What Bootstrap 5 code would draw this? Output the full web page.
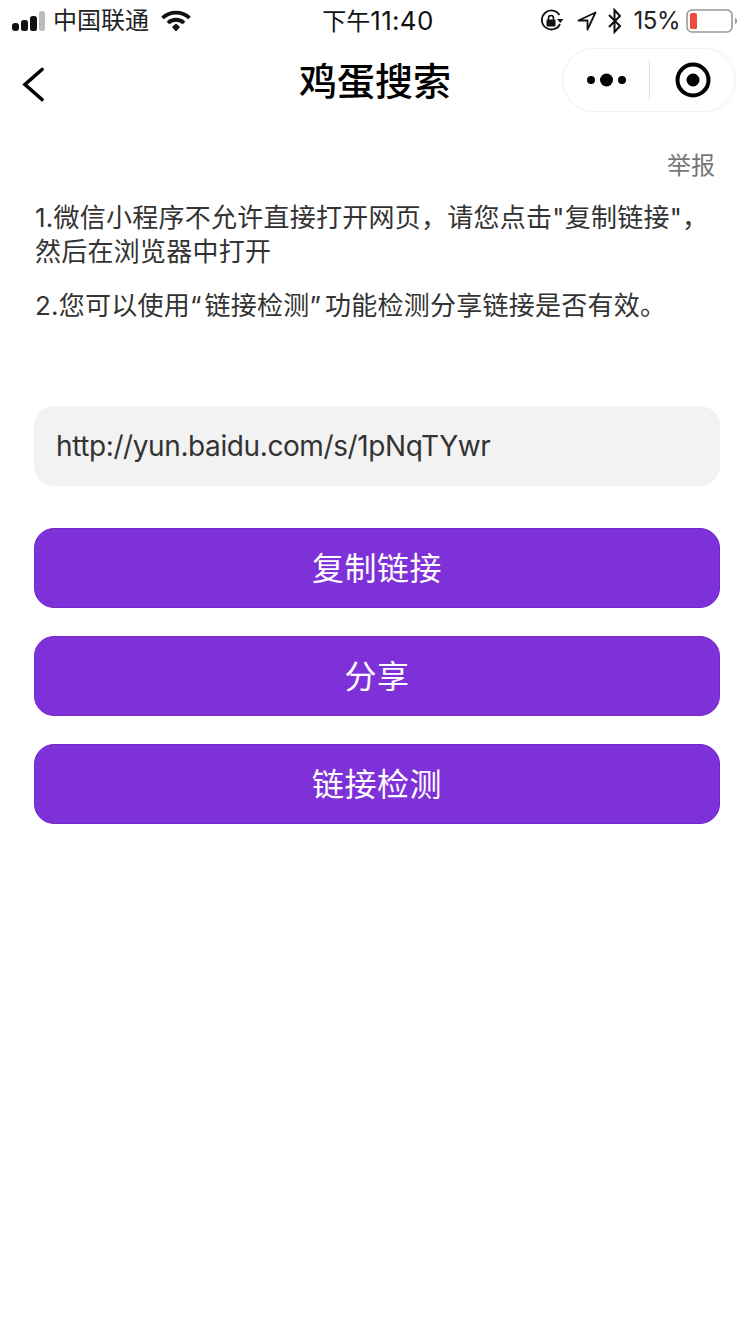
<!DOCTYPE html>
<html lang="zh-CN">

<head>
    <meta charset="UTF-8">
    <meta name="viewport" content="width=device-width, initial-scale=1">
    <title>鸡蛋搜索</title>

    <link href="https://cdn.jsdelivr.net/npm/bootstrap@5.3.2/dist/css/bootstrap.min.css" rel="stylesheet">

    <style>
        body {
            font-family: Inter, "Noto Sans CJK SC", sans-serif;
            background: #fff;
            color: #333;
        }

        .status-bar {
            height: 40px;
            padding: 1px 12px 0 12px;
            font-size: 24px;
            color: #222;
            position: relative;
        }

        .status-time {
            position: absolute;
            left: 0;
            right: 0;
            top: 4px;
            padding-left: 6px;
            text-align: center;
            line-height: 34px;
            color: #111;
        }

        .status-digits {
            font-size: 26px;
            letter-spacing: 0.3px;
        }

        .status-pct {
            letter-spacing: -0.5px;
            margin-left: 11px;
        }

        .title-bar {
            height: 88px;
            padding: 0 14px 0 22px;
            position: relative;
        }

        .page-title {
            position: absolute;
            left: 0;
            right: 0;
            top: 0;
            line-height: 82px;
            text-align: center;
            font-size: 38px;
            font-weight: 500;
            color: #000;
            margin: 0;
        }

        .capsule {
            width: 174px;
            height: 64px;
            margin-top: -8px;
            border: 1px solid #efefef;
            border-radius: 32px;
            background: #fff;
            position: relative;
        }

        .capsule-part {
            width: 86px;
        }

        .capsule-sep {
            width: 1px;
            height: 38px;
            background: #ddd;
        }

        .report-link {
            font-size: 24px;
            color: #777;
            line-height: 34px;
            padding: 21px 35px 0 0;
        }

        .tips {
            padding: 0 30px 0 35px;
            margin-top: 18px;
            font-size: 26px;
            line-height: 34px;
            color: #333;
            letter-spacing: 0.25px;
        }

        .tips p {
            margin: 0 0 20px;
        }

        .wide-mark {
            letter-spacing: 3px;
        }

        .wide-mark-end {
            letter-spacing: 4px;
        }

        .link-box {
            height: 80px;
            margin: 83px 30px 42px 34px;
            padding: 0 22px;
            background: #f2f2f2;
            border-radius: 20px;
            font-size: 28px;
            letter-spacing: -0.4px;
            color: #333;
        }

        .action-list {
            margin: 0 30px 0 34px;
            gap: 28px;
        }

        .btn-egg {
            height: 80px;
            padding-top: 8px;
            border-radius: 20px;
            background: #7f31d9;
            border: 1px solid #7429cb;
            color: #fff;
            font-size: 32px;
            letter-spacing: 0.5px;
        }

        .btn-egg:hover {
            background: #7429cb;
            color: #fff;
        }
    </style>
</head>

<body>

    <!-- status bar -->
    <div class="status-bar d-flex align-items-center">
        <svg width="33" height="20" viewBox="0 0 33 20" style="margin-right:8px">
            <rect x="0" y="12" width="7" height="8" rx="3" fill="#111" />
            <rect x="9" y="9" width="7" height="11" rx="2.500" fill="#111" />
            <rect x="18" y="5" width="7" height="15" rx="2.500" fill="#111" />
            <rect x="27" y="0" width="6" height="20" rx="2.500" fill="#bbb" />
        </svg>
        <span>中国联通</span>
        <svg width="30" height="22" viewBox="0 0 30 22" style="margin-left:12px">
            <path d="M1.500 8a19.500 19.500 0 0 1 27 0" fill="none" stroke="#111" stroke-width="3.800" />
            <path d="M7 13a11.500 11.500 0 0 1 16 0" fill="none" stroke="#111" stroke-width="3.800" />
            <path d="M11 17l4-3.500 4 3.500-4 4.500z" fill="#111" />
        </svg>
        <span class="status-time">下午<span class="status-digits">11:40</span></span>
        <div class="ms-auto d-flex align-items-center">
            <svg width="24" height="24" viewBox="0 0 24 24">
                <path d="M19.500 6A9.500 9.500 0 1 0 20 15" fill="none" stroke="#111" stroke-width="1.800" />
                <path d="M17 10h6.500l-3.200 4z" fill="#111" />
                <rect x="6.500" y="10.500" width="9" height="7" rx="1" fill="#111" />
                <path d="M8.500 11V9a2.500 2.500 0 0 1 5 0v2" fill="none" stroke="#111" stroke-width="1.600" />
            </svg>
            <svg width="20" height="20" viewBox="0 0 20 20" style="margin-left:13px">
                <path d="M18.500 1.500 1.500 9.500H10.500V18.500z" fill="none" stroke="#111" stroke-width="1.800" stroke-linejoin="round" />
            </svg>
            <svg width="16" height="26" viewBox="0 0 16 26" style="margin-left:10px">
                <path d="M2 7l11 11-5.500 6V2L13 8 2 19" fill="none" stroke="#111" stroke-width="2" />
            </svg>
            <span class="status-pct">15%</span>
            <svg width="52" height="24" viewBox="0 0 52 24" style="margin-left:6px">
                <rect x="1" y="1" width="45" height="22" rx="5" fill="#fff" stroke="#999" stroke-width="1.600" />
                <rect x="4" y="4" width="7" height="16" rx="1.500" fill="#ee4b3a" />
                <path d="M49 8.500a4 4 0 0 1 0 7z" fill="#999" />
            </svg>
        </div>
    </div>

    <!-- title bar -->
    <div class="title-bar d-flex align-items-center justify-content-between">
        <h1 class="page-title">鸡蛋搜索</h1>
        <svg width="24" height="35" viewBox="0 0 24 35">
            <path d="M20 2.500 3 17.500l17 15" fill="none" stroke="#000" stroke-width="3.600" stroke-linecap="round" />
        </svg>
        <div class="capsule d-flex align-items-center">
            <div class="capsule-part d-flex justify-content-center">
                <svg width="39" height="14" viewBox="0 0 39 14">
                    <circle cx="4" cy="7" r="4" fill="#000" />
                    <circle cx="19.500" cy="7" r="6.500" fill="#000" />
                    <circle cx="35" cy="7" r="4" fill="#000" />
                </svg>
            </div>
            <div class="capsule-sep"></div>
            <div class="flex-fill d-flex justify-content-center">
                <svg width="36" height="36" viewBox="0 0 36 36">
                    <circle cx="18" cy="18" r="15.500" fill="none" stroke="#000" stroke-width="4" />
                    <circle cx="18" cy="18" r="6.500" fill="#000" />
                </svg>
            </div>
        </div>
    </div>

    <div class="report-link text-end">举报</div>

    <div class="tips">
        <p>1.微信小程序不允许直接打开网页，请您点击"复制链接"，然后在浏览器中打开</p>
        <p>2.您可以使用<span class="wide-mark">“</span>链接检测<span class="wide-mark-end">”</span>功能检测分享链接是否有效。</p>
    </div>

    <div class="link-box d-flex align-items-center">http://yun.baidu.com/s/1pNqTYwr</div>

    <div class="action-list d-flex flex-column">
        <button type="button" class="btn btn-egg">复制链接</button>
        <button type="button" class="btn btn-egg">分享</button>
        <button type="button" class="btn btn-egg">链接检测</button>
    </div>

    <script src="https://cdn.jsdelivr.net/npm/bootstrap@5.3.2/dist/js/bootstrap.bundle.min.js"></script>
</body>

</html>
